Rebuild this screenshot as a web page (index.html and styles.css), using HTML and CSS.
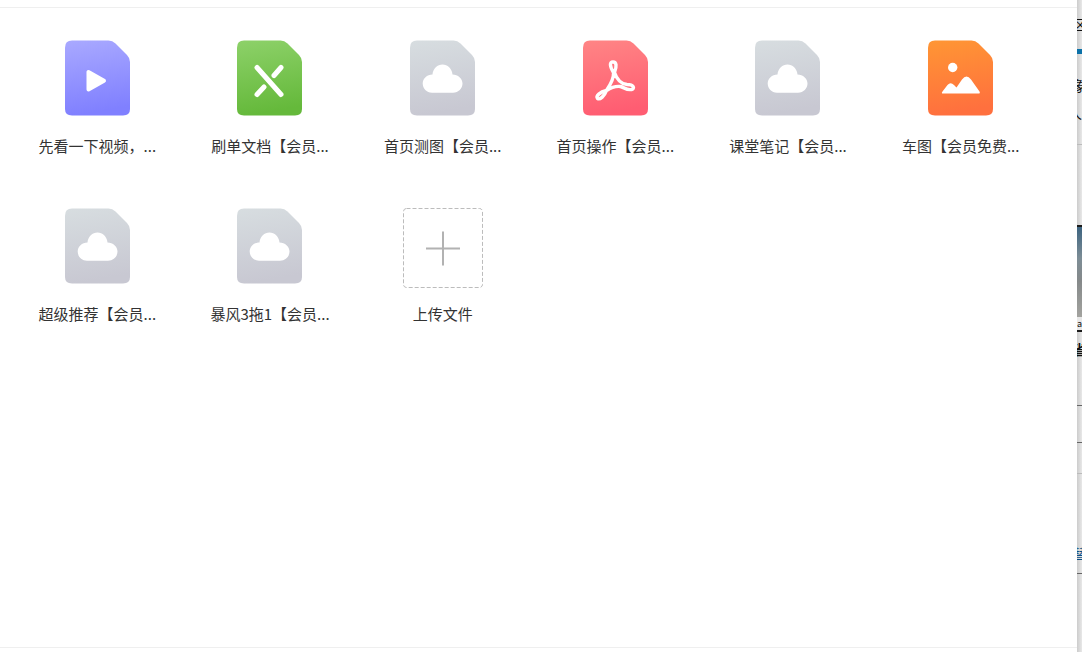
FILE: index.html
```html
<!DOCTYPE html>
<html lang="zh-CN">
<head>
<meta charset="utf-8">
<title>文件</title>
<link rel="stylesheet" href="styles.css">
</head>
<body>
<svg class="defs" width="0" height="0" aria-hidden="true">
  <defs>
    <linearGradient id="violet" x1="0" y1="0" x2="0.15" y2="1"><stop offset="0" stop-color="#a9a9ff"/><stop offset="1" stop-color="#8080ff"/></linearGradient>
    <linearGradient id="green" x1="0" y1="0" x2="0.15" y2="1"><stop offset="0" stop-color="#8dd169"/><stop offset="1" stop-color="#65b93b"/></linearGradient>
    <linearGradient id="grey" x1="0" y1="0" x2="0.15" y2="1"><stop offset="0" stop-color="#d7dde0"/><stop offset="1" stop-color="#c8c8d2"/></linearGradient>
    <linearGradient id="red" x1="0" y1="0" x2="0.15" y2="1"><stop offset="0" stop-color="#ff8585"/><stop offset="1" stop-color="#ff5d72"/></linearGradient>
    <linearGradient id="orange" x1="0" y1="0" x2="0.15" y2="1"><stop offset="0" stop-color="#ff9634"/><stop offset="1" stop-color="#ff703e"/></linearGradient>
    <path id="sheet" d="M7 .5H43.500Q47.500.5 50.500 3.500L62 15Q65 18 65 22V69Q65 75.500 58 75.500H7Q0 75.500 0 69V7.500Q0 .5 7 .5Z"/>
    <g id="cloud-file">
      <use href="#sheet" fill="url(#grey)"/>
      <path fill="#fff" d="M22.500 34.500C23 28.500 27.500 24.500 32.500 24.500S42 28.500 42.500 34.500C48 34.500 52.500 38.500 52.500 43.500S48.500 52.700 43 52.700H22C16.500 52.700 12.700 48.500 12.700 43.500S17 34.500 22.500 34.500Z"/>
    </g>
  </defs>
</svg>
<main class="panel">
  <ul class="files">
    <li class="file">
      <span class="thumb"><svg class="icon" viewBox="0 0 65 76" aria-hidden="true"><use href="#sheet" fill="url(#violet)"/><path fill="#fff" stroke="#fff" stroke-width="4" stroke-linejoin="round" d="M23.500 32V49.500L39 40.700Z"/></svg></span>
      <span class="name">先看一下视频，...</span>
    </li>
    <li class="file">
      <span class="thumb"><svg class="icon" viewBox="0 0 65 76" aria-hidden="true"><use href="#sheet" fill="url(#green)"/><path fill="none" stroke="#fff" stroke-width="5" stroke-linecap="round" d="M20 27.500 44 54.500M44 27.500 37 35.500M27 47 20 54.500"/></svg></span>
      <span class="name">刷单文档【会员...</span>
    </li>
    <li class="file">
      <span class="thumb"><svg class="icon" viewBox="0 0 65 76" aria-hidden="true"><use href="#cloud-file"/></svg></span>
      <span class="name">首页测图【会员...</span>
    </li>
    <li class="file">
      <span class="thumb"><svg class="icon" viewBox="0 0 65 76" aria-hidden="true"><use href="#sheet" fill="url(#red)"/><path fill="none" stroke="#fff" stroke-width="3.400" stroke-linejoin="round" d="M30.500 32.500C26.500 26 26.500 22 30 22S34 26 31.500 32.500C34 40 39 44 44 44.500C51 44.500 52 48.500 48.500 49.500C44 50.500 41 47.500 37.500 46.500C33 46 28 47.500 23.500 50.500C21.500 56 17 60 14.500 58.500C12.500 56 17 52 23.500 50.500C28.500 43 31 37 30.500 32.500Z"/></svg></span>
      <span class="name">首页操作【会员...</span>
    </li>
    <li class="file">
      <span class="thumb"><svg class="icon" viewBox="0 0 65 76" aria-hidden="true"><use href="#cloud-file"/></svg></span>
      <span class="name">课堂笔记【会员...</span>
    </li>
    <li class="file">
      <span class="thumb"><svg class="icon" viewBox="0 0 65 76" aria-hidden="true"><use href="#sheet" fill="url(#orange)"/><circle cx="24.700" cy="27.500" r="4.700" fill="#fff"/><path fill="#fff" d="M15 53.500Q13 53.500 14.500 51.500L19.500 45Q22.500 41.500 26 45L28.500 47.500L34 39.500Q38.500 33.500 43 39.500L51.500 51.500Q52.500 53.500 50.500 53.500Z"/></svg></span>
      <span class="name">车图【会员免费...</span>
    </li>
    <li class="file">
      <span class="thumb"><svg class="icon" viewBox="0 0 65 76" aria-hidden="true"><use href="#cloud-file"/></svg></span>
      <span class="name">超级推荐【会员...</span>
    </li>
    <li class="file">
      <span class="thumb"><svg class="icon" viewBox="0 0 65 76" aria-hidden="true"><use href="#cloud-file"/></svg></span>
      <span class="name">暴风3拖1【会员...</span>
    </li>
    <li>
      <button class="file upload" type="button">
        <span class="thumb"><svg class="dropzone" viewBox="0 0 80 80" aria-hidden="true"><rect x=".5" y=".5" width="79" height="79" rx="3" fill="none" stroke="#bcbcbc" stroke-dasharray="4 2"/><path d="M23 40.500H57M40 23.500V57.500" fill="none" stroke="#b2b2b2" stroke-width="2"/></svg></span>
        <span class="name">上传文件</span>
      </button>
    </li>
  </ul>
</main>
<aside class="backdrop">
  <span class="glyph glyph-first">区</span>
  <div class="bar"></div>
  <span class="glyph glyph-second">象</span>
  <span class="glyph glyph-third">人</span>
  <div class="rule rule-light rule-head"></div>
  <div class="photo"></div>
  <div class="caption">a.</div>
  <span class="glyph glyph-bold">省</span>
  <div class="rule rule-field"></div>
  <div class="rule rule-field-end"></div>
  <div class="rule rule-light rule-section"></div>
  <span class="glyph glyph-last">替</span>
  <div class="rule rule-foot"></div>
</aside>
</body>
</html>
```

FILE: styles.css
```css
* {
  box-sizing: border-box;
}

body {
  margin: 0;
  display: flex;
  min-height: 100vh;
  background: #fff;
  color: #333;
  font: 15px/20px "Noto Sans CJK SC", "Noto Sans", sans-serif;
}

.defs {
  position: absolute;
}

.panel {
  flex: 1;
  min-width: 0;
  display: flex;
  padding: 7px 0 4px;
}

.files {
  flex: 1;
  display: grid;
  grid-template-columns: repeat(6, 1fr);
  align-content: start;
  row-gap: 52px;
  margin: 0;
  padding: 32px 30px 32px 11px;
  border: solid #efefef;
  border-width: 1px 0;
  list-style: none;
}

.file {
  display: flex;
  flex-direction: column;
  align-items: center;
  gap: 16px;
}

.upload {
  width: 100%;
  padding: 0;
  border: 0;
  background: none;
  color: inherit;
  font: inherit;
  cursor: pointer;
}

.thumb {
  display: block;
  height: 80px;
}

.icon {
  display: block;
  width: 65px;
  height: 76px;
}

.dropzone {
  display: block;
  width: 80px;
  height: 80px;
}

.name {
  white-space: nowrap;
}

.backdrop {
  flex: none;
  width: 5px;
  overflow: hidden;
  background: linear-gradient(90deg, #cccccc, #e8e8e8);
  color: #111;
  font-size: 14px;
  line-height: 16px;
}

.glyph {
  display: flex;
  justify-content: center;
}

.glyph-first {
  margin-top: 16px;
}

.bar {
  height: 5px;
  margin-top: 17px;
  background: #0b71a8;
}

.glyph-second {
  margin-top: 23px;
}

.glyph-third {
  justify-content: flex-end;
  margin-top: 12px;
}

.glyph-bold {
  margin-top: 9px;
  font-weight: 700;
}

.glyph-last {
  margin-top: 71px;
  color: #0b4f86;
}

.rule {
  height: 1px;
  background: #666;
}

.rule-light {
  background: #bbb;
}

.rule-head {
  margin-top: 23px;
}

.rule-field {
  margin-top: 48px;
}

.rule-field-end {
  margin-top: 36px;
}

.rule-section {
  margin-top: 30px;
}

.rule-foot {
  margin-top: 12px;
}

.photo {
  height: 92px;
  margin-top: 80px;
  border-top: 2px solid #1c1c1c;
  background: linear-gradient(#3d6480, #7d8d96 35%, #85898a 60%, #a3a39f);
}

.caption {
  height: 15px;
  border-bottom: 2px solid #1c1c1c;
  background: #e8e8e8;
  font-size: 9px;
  line-height: 13px;
}
```
